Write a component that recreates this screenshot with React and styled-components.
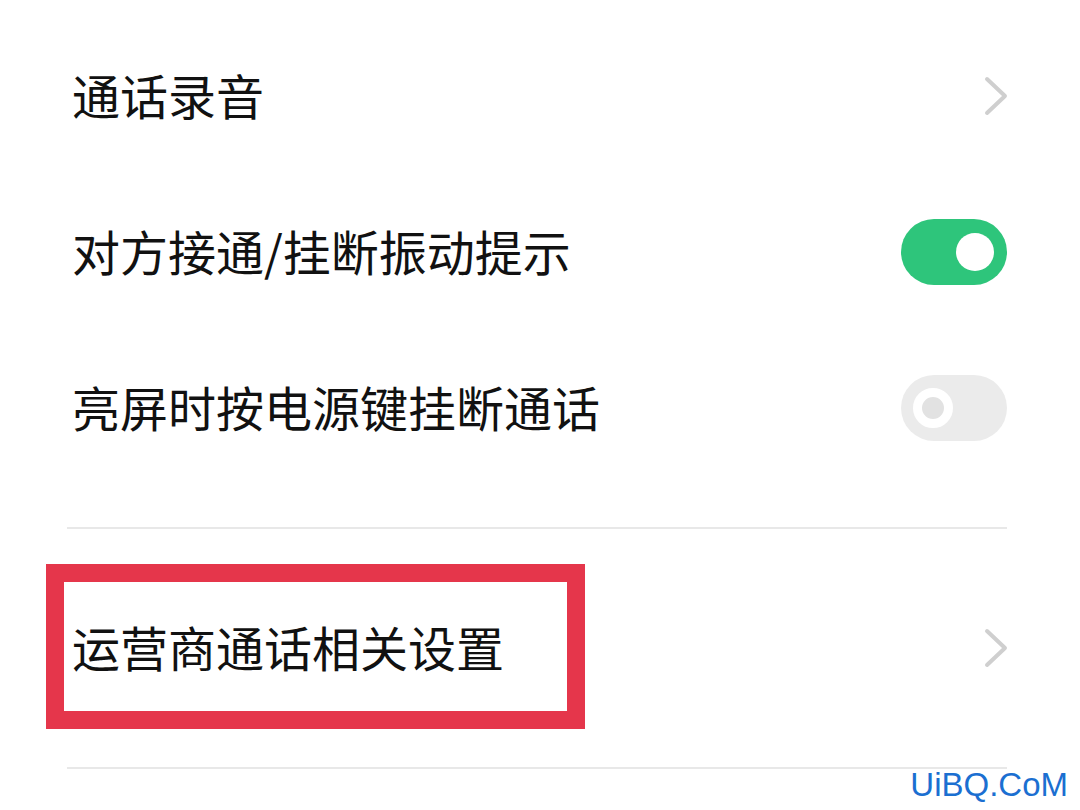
import React from "react";
import styled, { createGlobalStyle } from "styled-components";

const GlobalStyle = createGlobalStyle`
  html, body {
    margin: 0;
    padding: 0;
    background: #ffffff;
  }
  body {
    font-family: "Noto Sans CJK SC", "Noto Sans", sans-serif;
  }
`;

const rows = [
  { label: "通话录音", type: "link" },
  { label: "对方接通/挂断振动提示", type: "toggle", on: true },
  { label: "亮屏时按电源键挂断通话", type: "toggle", on: false },
];

const Chevron = () => (
  <svg width="26" height="42" viewBox="0 0 26 42">
    <polyline
      points="4,4 22,21 4,38"
      fill="none"
      stroke="#cfcfcf"
      strokeWidth="4"
      strokeLinecap="round"
      strokeLinejoin="round"
    />
  </svg>
);

const App = () => {
  return (
    <Wrapper>
      <GlobalStyle />
      <List>
        {rows.map((row) => (
          <Row key={row.label}>
            <Label>{row.label}</Label>
            {row.type === "link" ? (
              <Chevron />
            ) : (
              <Toggle $on={row.on}>
                <Knob $on={row.on} />
              </Toggle>
            )}
          </Row>
        ))}
      </List>
      <Divider />
      <Section>
        <Row $tall>
          <Label>运营商通话相关设置</Label>
          <Chevron />
          <Highlight />
        </Row>
      </Section>
      <Divider />
      <Watermark>UiBQ.CoM</Watermark>
    </Wrapper>
  );
};

export default App;

const Wrapper = styled.div`
  position: relative;
  width: 1080px;
  height: 810px;
  overflow: hidden;
  background: #fff;
`;

const List = styled.div`
  display: flex;
  flex-direction: column;
  padding-top: 18px;
  padding-bottom: 41px;
`;

const Section = styled.div`
  display: flex;
  flex-direction: column;
`;

const Row = styled.div`
  position: relative;
  display: flex;
  align-items: center;
  justify-content: space-between;
  height: ${(p) => (p.$tall ? "238px" : "156px")};
  padding: 0 71px 0 72px;
  box-sizing: border-box;
`;

const Label = styled.span`
  font-size: 48px;
  line-height: 1;
  color: #111111;
  font-weight: 400;
  margin-bottom: 5px;
`;

const Toggle = styled.span`
  display: flex;
  align-items: center;
  justify-content: ${(p) => (p.$on ? "flex-end" : "flex-start")};
  width: 106px;
  height: 66px;
  margin-right: 2px;
  padding: ${(p) => (p.$on ? "0 13px 0 0" : "0 0 0 12px")};
  box-sizing: border-box;
  border-radius: 33px;
  background: ${(p) => (p.$on ? "#2ec57b" : "#ebebeb")};
`;

const Knob = styled.span`
  display: block;
  box-sizing: border-box;
  width: ${(p) => (p.$on ? "38px" : "40px")};
  height: ${(p) => (p.$on ? "38px" : "40px")};
  border-radius: 50%;
  background: ${(p) => (p.$on ? "#ffffff" : "#e2e2e2")};
  border: ${(p) => (p.$on ? "none" : "9px solid #ffffff")};
`;

const Divider = styled.div`
  height: 2px;
  margin: 0 73px 0 67px;
  background: #e8e8e8;
`;

const Highlight = styled.div`
  position: absolute;
  left: 46px;
  top: 35px;
  width: 539px;
  height: 165px;
  box-sizing: border-box;
  border: 18px solid #e5364b;
  pointer-events: none;
`;

const Watermark = styled.div`
  position: absolute;
  right: 12px;
  bottom: 9px;
  font-family: "Liberation Sans", Arial, sans-serif;
  font-size: 33px;
  line-height: 1;
  color: #1b6fd1;
`;
